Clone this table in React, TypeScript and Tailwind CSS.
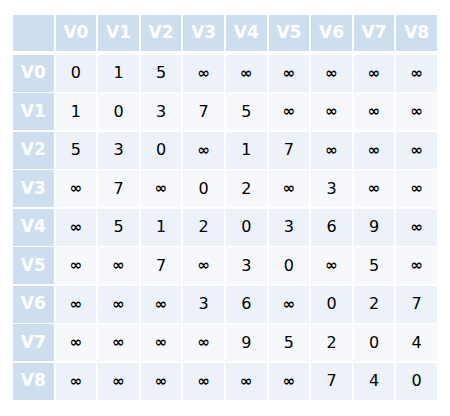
const INF = '∞';

const labels = ['V0', 'V1', 'V2', 'V3', 'V4', 'V5', 'V6', 'V7', 'V8'];

const matrix: (number | string)[][] = [
  [0, 1, 5, INF, INF, INF, INF, INF, INF],
  [1, 0, 3, 7, 5, INF, INF, INF, INF],
  [5, 3, 0, INF, 1, 7, INF, INF, INF],
  [INF, 7, INF, 0, 2, INF, 3, INF, INF],
  [INF, 5, 1, 2, 0, 3, 6, 9, INF],
  [INF, INF, 7, INF, 3, 0, INF, 5, INF],
  [INF, INF, INF, 3, 6, INF, 0, 2, 7],
  [INF, INF, INF, INF, 9, 5, 2, 0, 4],
  [INF, INF, INF, INF, INF, INF, 7, 4, 0],
];

export default function App() {
  return (
    <div className="w-[450px] h-[416px] bg-white pl-[13px] pt-[15px] font-['DejaVu_Sans',sans-serif]">
      <div className="w-[424px] flex flex-col gap-[1.75px]">
        {/* Header row */}
        <div className="grid grid-cols-10 gap-x-[2px] h-[36px] mb-[2px]">
          <div className="bg-[#cfdeee]" />
          {labels.map((l) => (
            <div
              key={l}
              className="bg-[#cfdeee] flex items-center justify-center text-white font-bold text-[17px]"
            >
              {l}
            </div>
          ))}
        </div>

        {/* Body rows */}
        {matrix.map((row, i) => (
          <div key={labels[i]} className="grid grid-cols-10 gap-x-[2px] h-[36.75px]">
            <div className="bg-[#cfdeee] flex items-center justify-center text-white font-bold text-[17px]">
              {labels[i]}
            </div>
            {row.map((v, j) => (
              <div
                key={j}
                className={`flex items-center justify-center text-black ${
                  i % 2 === 0 ? 'bg-[#edf2f9]' : 'bg-[#f6f8fc]'
                } ${v === INF ? 'text-[15px] font-bold' : 'text-[16px]'}`}
              >
                {v}
              </div>
            ))}
          </div>
        ))}
      </div>
    </div>
  );
}
